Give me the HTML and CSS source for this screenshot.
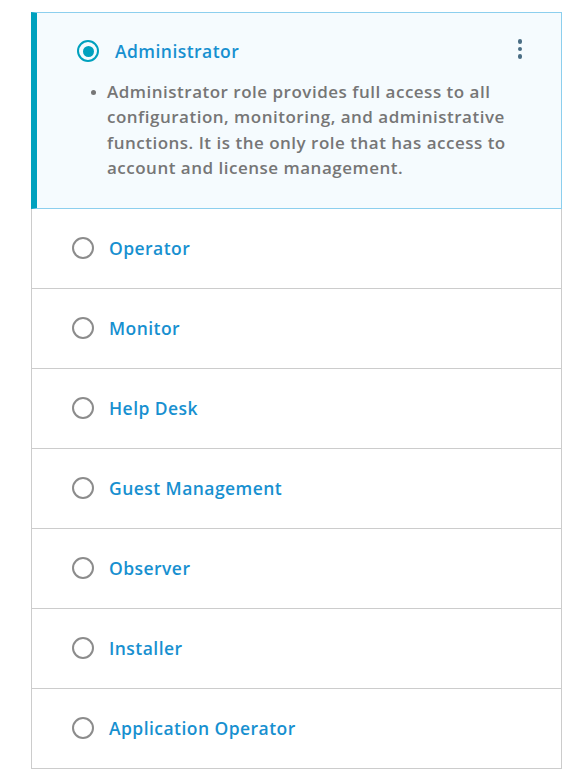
FILE: index.html
```html
<!DOCTYPE html>
<html>
<head>
<meta charset="utf-8">
<link rel="stylesheet" href="styles.css">
</head>
<body>
<div class="panel">
  <div class="card selected">
    <div class="card-head">
      <span class="radio checked"></span>
      <span class="title">Administrator</span>
      <span class="kebab"><i></i><i></i><i></i></span>
    </div>
    <ul class="desc">
      <li>Administrator role provides full access to all configuration, monitoring, and administrative functions. It is the only role that has access to account and license management.</li>
    </ul>
  </div>
  <div class="card"><span class="radio"></span><span class="title">Operator</span></div>
  <div class="card"><span class="radio"></span><span class="title">Monitor</span></div>
  <div class="card"><span class="radio"></span><span class="title">Help Desk</span></div>
  <div class="card"><span class="radio"></span><span class="title">Guest Management</span></div>
  <div class="card"><span class="radio"></span><span class="title">Observer</span></div>
  <div class="card"><span class="radio"></span><span class="title">Installer</span></div>
  <div class="card"><span class="radio"></span><span class="title">Application Operator</span></div>
</div>
</body>
</html>
```
FILE: styles.css
```css
html, body { margin: 0; padding: 0; background: #fff; }
body { font-family: "Open Sans", "Liberation Sans", sans-serif; }
.panel { margin: 12px 0 0 31px; width: 531px; }
.card {
  display: flex;
  align-items: center;
  height: 77px;
  padding-bottom: 2px;
  border: 1px solid #cccccc;
  border-top: none;
  padding-left: 40px;
  box-sizing: content-box;
}
.card.selected {
  display: block;
  background: #f5fbfe;
  border: 1px solid #8ccfee;
  border-left: 6px solid #00a1be;
  padding: 0;
  height: 195px;
}
.card-head {
  display: flex;
  align-items: center;
  height: 40px;
  padding: 18px 0 0 40px;
  position: relative;
}
.radio {
  width: 22px; height: 22px;
  box-sizing: border-box;
  border: 2px solid #8c8c8c;
  border-radius: 50%;
  flex: none;
  margin-right: 15px;
}
.radio.checked {
  border-color: #00a1be;
  position: relative;
  margin-right: 16px;
}
.radio.checked::after {
  content: "";
  position: absolute;
  left: 3.5px; top: 3.5px;
  width: 11px; height: 11px;
  border-radius: 50%;
  background: #00a1be;
}
.title {
  font-size: 17.5px;
  font-weight: 600;
  letter-spacing: 0.45px;
  color: #1790d0;
}
.kebab {
  position: absolute;
  right: 39px; top: 26px;
  display: flex; flex-direction: column; gap: 3px;
}
.kebab i {
  display: block; width: 4.5px; height: 4.5px; border-radius: 50%;
  background: #4b6e85;
}
.desc {
  margin: 8px 0 0 0;
  padding: 0 0 0 70px;
  list-style: none;
  width: 416px;
  font-size: 17px;
  font-weight: 600;
  letter-spacing: 0.5px;
  line-height: 25.3px;
  color: #767676;
}
.desc li { position: relative; }
.desc li::before {
  content: "";
  position: absolute;
  left: -16px; top: 11px;
  width: 5px; height: 5px; border-radius: 50%;
  background: #767676;
}
```
